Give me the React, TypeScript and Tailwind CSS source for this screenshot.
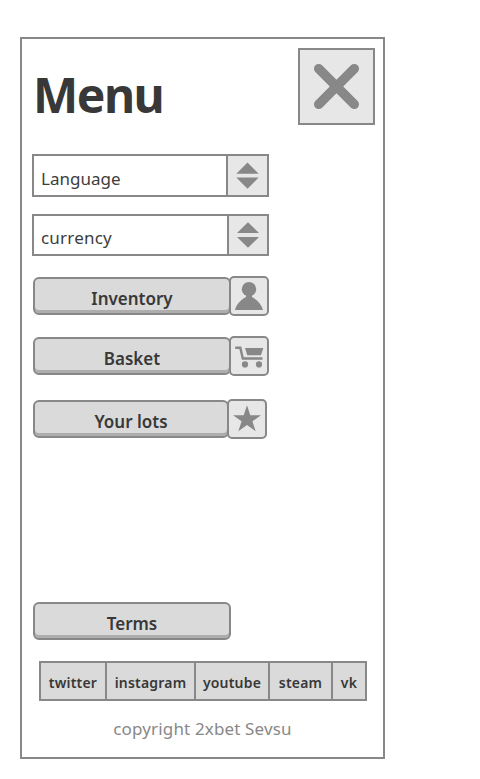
import type { ReactNode } from "react";

function Label({ className = "", children }: { className?: string; children: ReactNode }) {
  return <span className={`block whitespace-nowrap leading-6 ${className}`}>{children}</span>;
}

function Select({ label, className, labelClass, triggerClass, arrow }: { label: string; className: string; labelClass: string; triggerClass: string; arrow: ReactNode }) {
  return (
    <div className={`flex w-[237px] border-2 border-[#888] ${className}`}>
      <div className={`flex-1 pl-[7px] ${labelClass}`}>
        <Label className="text-[17px] text-[#3d3d3d]">{label}</Label>
      </div>
      <button className={`flex justify-center border-l-2 border-[#888] bg-[#e7e7e7] ${triggerClass}`}>{arrow}</button>
    </div>
  );
}

function Button({ label, className = "w-[198px]" }: { label: string; className?: string }) {
  return (
    <button className={`h-[38px] shrink-0 rounded-[6px] border-2 border-[#888] bg-[#dadada] pt-[6px] text-[#383838] shadow-[inset_0_-3px_0_#adadad] ${className}`}>
      <Label className="text-[17px] font-semibold">{label}</Label>
    </button>
  );
}

function IconBox({ children }: { children: ReactNode }) {
  return (
    <button className="-ml-[2px] size-10 shrink-0 rounded-[5px] border-2 border-[#888] bg-[#e7e7e7]">
      <svg viewBox="2 2 36 36" className="size-9" fill="#888">{children}</svg>
    </button>
  );
}

export default function App() {
  return (
    <div className="h-[779px] bg-white pl-5 pt-[37px] font-['Noto_Sans','Open_Sans',sans-serif] text-[#383838]">
      <main className="flex h-[722px] w-[365px] flex-col border-2 border-[#888] bg-white">
        <header className="flex justify-between pl-[11px] pr-2 pt-[9px]">
          <h1 className="pt-[15px] text-[48px] font-bold leading-[64px] tracking-[-1.5px]">Menu</h1>
          <button className="size-[77px] border-2 border-[#888] bg-[#e7e7e7]">
            <svg viewBox="0 0 73 73" className="size-[73px]" stroke="#888" strokeWidth="9.5" strokeLinecap="round">
              <path d="M18.7 18.7 54.3 54.3M54.3 18.7 18.7 54.3" />
            </svg>
          </button>
        </header>

        <div className="pl-[10px] pt-[27px]">
          <Select
            label="Language"
            className="h-[43px]"
            labelClass="pt-[11px]"
            triggerClass="w-[41px]"
            arrow={<svg viewBox="0 0 39 39" className="size-[39px]" fill="#888"><path d="M19.5 6.500 30.700 17.700H8.300ZM8.300 21.500H30.700L19.500 32.700Z" /></svg>}
          />
          <Select
            label="currency"
            className="mt-[17px] h-[42px]"
            labelClass="pt-[10px] tracking-[0.2px]"
            triggerClass="w-[40px]"
            arrow={<svg viewBox="0 0 38 38" className="size-[38px]" fill="#888"><path d="M19 6.200 30 17H8ZM8 21H30L19 31.800Z" /></svg>}
          />
        </div>

        <nav className="flex flex-col pl-[11px] pt-5">
          <div className="flex items-center">
            <Button label="Inventory" />
            <IconBox>
              <circle cx="20" cy="13.200" r="7.200" />
              <path d="M17 17H23V21C28 23.500 32.500 28 34 34H6C7.500 28 12 23.500 17 21Z" />
            </IconBox>
          </div>
          <div className="mt-5 flex items-center">
            <Button label="Basket" />
            <IconBox>
              <path d="M16 12H34.300L32 19.300H18.300Z" />
              <path d="M6.200 11.800H11.300L13.800 22.500H33.500" fill="none" stroke="#888" strokeWidth="2.400" />
              <circle cx="16" cy="28.400" r="3.100" />
              <circle cx="30" cy="28.400" r="3.100" />
            </IconBox>
          </div>
          <div className="mt-[23px] flex items-center">
            <Button label="Your lots" className="w-[196px]" />
            <IconBox>
              <path d="M20 6.200 23.300 16.200H34L25.400 22.300 28.700 32.200 20 26 11.300 32.200 14.600 22.300 6 16.200H16.700Z" />
            </IconBox>
          </div>
        </nav>

        <footer className="mt-[163px]">
          <div className="flex pl-[11px]"><Button label="Terms" /></div>
          <div className="ml-[17px] mt-[21px] flex h-10 w-[328px] border-2 border-[#888] bg-[#dadada] text-center text-[14px] font-semibold tracking-[0.2px]">
            <a className="w-[66px] border-r-2 border-[#888] pt-2"><Label>twitter</Label></a>
            <a className="w-[89px] border-r-2 border-[#888] pt-2"><Label>instagram</Label></a>
            <a className="w-[74px] border-r-2 border-[#888] pt-2"><Label>youtube</Label></a>
            <a className="w-[63px] border-r-2 border-[#888] pt-2"><Label>steam</Label></a>
            <a className="flex-1 pt-2"><Label>vk</Label></a>
          </div>
          <p className="mt-4 text-center text-[17px] tracking-[0.15px] text-[#888]"><Label>copyright 2xbet Sevsu</Label></p>
        </footer>
      </main>
    </div>
  );
}
